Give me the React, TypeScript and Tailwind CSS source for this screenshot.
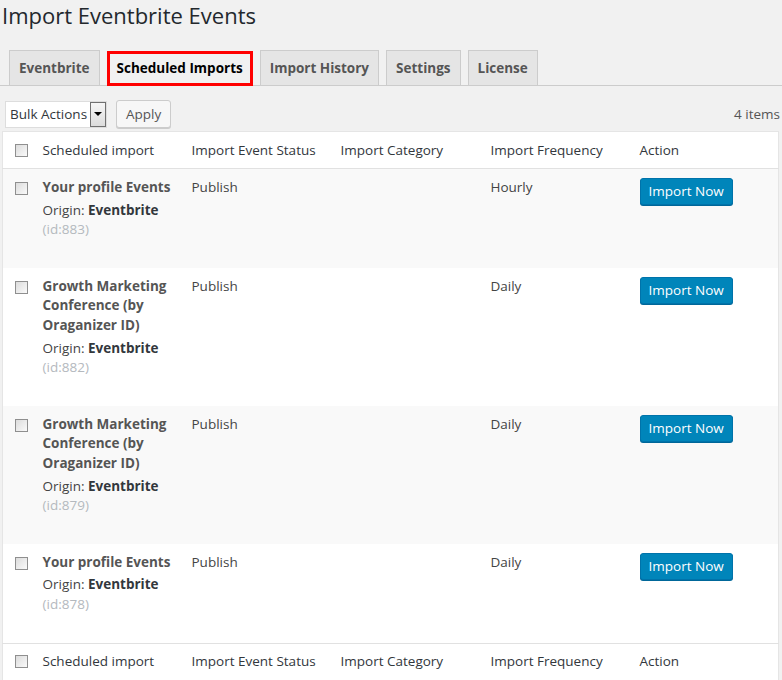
import React from "react"

const font = { fontFamily: '"Open Sans", "Noto Sans", sans-serif' }

const tabs = ["Eventbrite", "Scheduled Imports", "Import History", "Settings", "License"]

type Row = {
    title: string[]
    status: string
    frequency: string
    id: number
}

const rows: Row[] = [
    { title: ["Your profile Events"], status: "Publish", frequency: "Hourly", id: 883 },
    { title: ["Growth Marketing", "Conference (by", "Oraganizer ID)"], status: "Publish", frequency: "Daily", id: 882 },
    { title: ["Growth Marketing", "Conference (by", "Oraganizer ID)"], status: "Publish", frequency: "Daily", id: 879 },
    { title: ["Your profile Events"], status: "Publish", frequency: "Daily", id: 878 },
]

function Checkbox() {
    return (
        <span className="block w-[13px] h-[13px] border border-[#8f8f8f] bg-gradient-to-br from-[#dcdcdc] to-[#fafafa]" />
    )
}

function HeaderRow({ top }: { top?: boolean }) {
    return (
        <tr className={top ? "border-b border-[#e1e1e1]" : "border-t border-[#e1e1e1]"}>
            <td className="pl-[12px] align-middle">
                <Checkbox />
            </td>
            {["Scheduled import", "Import Event Status", "Import Category", "Import Frequency", "Action"].map(h => (
                <td key={h} className="px-[8px] h-[37px] align-middle text-[#32373c] whitespace-nowrap">
                    {h}
                </td>
            ))}
        </tr>
    )
}

export default function App() {
    return (
        <div className="bg-[#f1f1f1] w-[782px] h-[680px] overflow-hidden text-[13.5px] text-[#444]" style={font}>
            <h1 className="pl-[2px] pt-[1px] text-[22px] leading-[28px] text-[#23282d]">Import Eventbrite Events</h1>

            <div className="mt-[21px] flex gap-[7px] pl-[9px] border-b border-[#ccc] h-[36px] items-end">
                {tabs.map(t =>
                    t === "Scheduled Imports" ? (
                        <div
                            key={t}
                            className="h-[35px] -mb-px px-[7px] border-[3px] border-[#ff0000] bg-[#f1f1f1] font-bold text-black flex items-center"
                        >
                            {t}
                        </div>
                    ) : (
                        <div
                            key={t}
                            className="h-[35px] px-[9px] border border-[#ccc] border-b-0 bg-[#e5e5e5] font-bold text-[#555] flex items-center"
                        >
                            {t}
                        </div>
                    )
                )}
            </div>

            <div className="flex items-center mt-[14px] pl-[5px] pr-[2px] h-[28px]">
                <div className="flex h-[27px] w-[102px] bg-white border border-[#ddd]">
                    <span className="flex-1 pl-[4px] flex items-center text-[#32373c]">Bulk Actions</span>
                    <span className="w-[16px] border border-[#707070] bg-gradient-to-b from-[#f6f6f6] to-[#dcdcdc] flex items-center justify-center">
                        <span className="w-0 h-0 border-l-[4px] border-r-[4px] border-t-[4px] border-l-transparent border-r-transparent border-t-black" />
                    </span>
                </div>
                <button className="ml-[9px] h-[28px] px-[9px] border border-[#ccc] rounded-[3px] bg-[#f7f7f7] text-[#555] shadow-[0_1px_0_#ccc]">
                    Apply
                </button>
                <span className="ml-auto text-[#555]">4 items</span>
            </div>

            <table className="mt-[3px] ml-[2px] w-[777px] table-fixed bg-white border border-[#e5e5e5] border-collapse">
                <colgroup>
                    <col className="w-[32px]" />
                    <col className="w-[149px]" />
                    <col className="w-[149px]" />
                    <col className="w-[150px]" />
                    <col className="w-[149px]" />
                    <col />
                </colgroup>
                <thead>
                    <HeaderRow top />
                </thead>
                <tbody>
                    {rows.map((r, i) => (
                        <tr key={r.id} className={i % 2 === 0 ? "bg-[#f9f9f9]" : "bg-white"}>
                            <td className="pl-[12px] pt-[13px] align-top">
                                <Checkbox />
                            </td>
                            <td className="px-[8px] pt-[9px] pb-[8px] align-top leading-[19.6px]">
                                {r.title.map(l => (
                                    <div key={l} className="font-bold text-[#555] whitespace-nowrap">
                                        {l}
                                    </div>
                                ))}
                                <div className="mt-[3px]">
                                    Origin: <b className="text-[#32373c]">Eventbrite</b>
                                </div>
                                <div className="text-[#b4b9be]">(id:{r.id})</div>
                                <div className="h-[20px]" />
                            </td>
                            <td className="px-[8px] pt-[9px] align-top leading-[19.6px]">{r.status}</td>
                            <td className="px-[8px] pt-[9px] align-top" />
                            <td className="px-[8px] pt-[9px] align-top leading-[19.6px]">{r.frequency}</td>
                            <td className="px-[8px] pt-[9px] align-top">
                                <button className="h-[27px] px-[8px] bg-[#0085ba] border border-[#0073aa] rounded-[3px] text-white shadow-[0_1px_0_#006799]">
                                    Import Now
                                </button>
                            </td>
                        </tr>
                    ))}
                </tbody>
                <tfoot>
                    <HeaderRow />
                </tfoot>
            </table>
        </div>
    )
}
